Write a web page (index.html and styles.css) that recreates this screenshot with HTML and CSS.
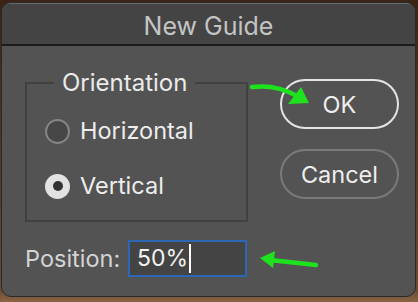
FILE: index.html
```html
<!DOCTYPE html>
<html lang="en">
<head>
    <meta charset="UTF-8">
    <meta name="viewport" content="width=device-width, initial-scale=1.0">
    <title>New Guide</title>
    <link rel="stylesheet" href="styles.css">
</head>
<body>
    <div class="dialog">
        <div class="title_bar">New Guide</div>
        <div class="dialog_body">
            <div class="main_row">
                <fieldset class="orientation">
                    <legend>Orientation</legend>
                    <label class="radio"><span class="radio_dot"></span>Horizontal</label>
                    <label class="radio checked"><span class="radio_dot"></span>Vertical</label>
                </fieldset>
                <div class="buttons">
                    <button class="btn default">OK</button>
                    <button class="btn">Cancel</button>
                </div>
            </div>
            <div class="position_row">
                <span class="position_label">Position:</span>
                <div class="position_input">50%<span class="caret"></span></div>
            </div>
        </div>
        <!-- green callout arrows drawn over the dialog -->
        <svg class="arrows" width="418" height="302" viewBox="0 0 418 302">
            <path d="M252 87 Q276 84 297 96" fill="none" stroke="#1fe21f" stroke-width="4.5" stroke-linecap="round"/>
            <polygon points="309,103 288,104 301,87" fill="#1fe21f"/>
            <path d="M316 265 L270 260" fill="none" stroke="#1fe21f" stroke-width="4.5" stroke-linecap="round"/>
            <polygon points="260,258 275,251 273,268" fill="#1fe21f"/>
        </svg>
    </div>
</body>
</html>
```

FILE: styles.css
```css
*,
*::before,
*::after{
    box-sizing: border-box;
    margin: 0;
    padding: 0;
}

body{
    width: 418px;
    height: 302px;
    overflow: hidden;
    background: linear-gradient(to bottom, #3b2416 0, #3b2416 3px, #6b4a30 96%, #8a6446);
    font-family: Inter, "Open Sans", sans-serif;
}

.dialog{
    position: relative;
    margin: 2px 2px 0 1px;
    width: 415px;
    height: 295px;
    background: #535353;
    border: 1px solid #2a2a2a;
    border-radius: 10px;
    overflow: hidden;
    box-shadow: inset 0 1px 0 #777;
}

.title_bar{
    height: 43px;
    padding-top: 4px;
    background: #444;
    border-bottom: 2px solid #1c1c1c;
    color: #c4c4c4;
    font-size: 25px;
    text-align: center;
    line-height: 39px;
    box-shadow: inset 0 1px 0 #6a6a6a;
}

.dialog_body{
    padding: 24px 0 0 23px;
}

.main_row{
    display: flex;
    align-items: flex-start;
}

.orientation{
    width: 223px;
    height: 152px;
    border: 2px solid #414141;
    padding: 22px 0 0 18px;
    display: flex;
    flex-direction: column;
    gap: 29px;
}

.orientation legend{
    margin-left: 9px;
    padding: 0 8px;
    color: #ebebeb;
    font-size: 24px;
    line-height: 26px;
}

.radio{
    display: flex;
    align-items: center;
    gap: 10px;
    color: #ededed;
    font-size: 23.5px;
    line-height: 26px;
}

.radio_dot{
    width: 25px;
    height: 25px;
    border-radius: 50%;
    border: 2px solid #858585;
    background: #474747;
    display: flex;
    align-items: center;
    justify-content: center;
}

.radio.checked .radio_dot{
    border: none;
    background: #e2e2e2;
}

.radio.checked .radio_dot::after{
    content: '';
    width: 10px;
    height: 10px;
    border-radius: 50%;
    background: #333;
}

.buttons{
    margin: 9px 0 0 32px;
    display: flex;
    flex-direction: column;
    gap: 20px;
}

.btn{
    width: 119px;
    height: 50px;
    border-radius: 25px;
    border: 2px solid #7a7a7a;
    background: transparent;
    color: #eee;
    font-family: Inter, "Open Sans", sans-serif;
    font-size: 23.5px;
}

.btn.default{
    border-color: #e4e4e4;
}

.position_row{
    display: flex;
    align-items: center;
    margin-top: 18px;
}

.position_label{
    width: 103px;
    color: #d4d4d4;
    font-size: 23.5px;
}

.position_input{
    width: 119px;
    height: 37px;
    border: 2px solid #2c67b5;
    background: #444;
    color: #f2f2f2;
    font-size: 23px;
    line-height: 33px;
    padding-left: 7px;
    display: flex;
    align-items: center;
}

.caret{
    width: 2px;
    height: 29px;
    margin-left: 1px;
    background: #fff;
}

.arrows{
    position: absolute;
    left: -2px;
    top: -3px;
    pointer-events: none;
}
```
